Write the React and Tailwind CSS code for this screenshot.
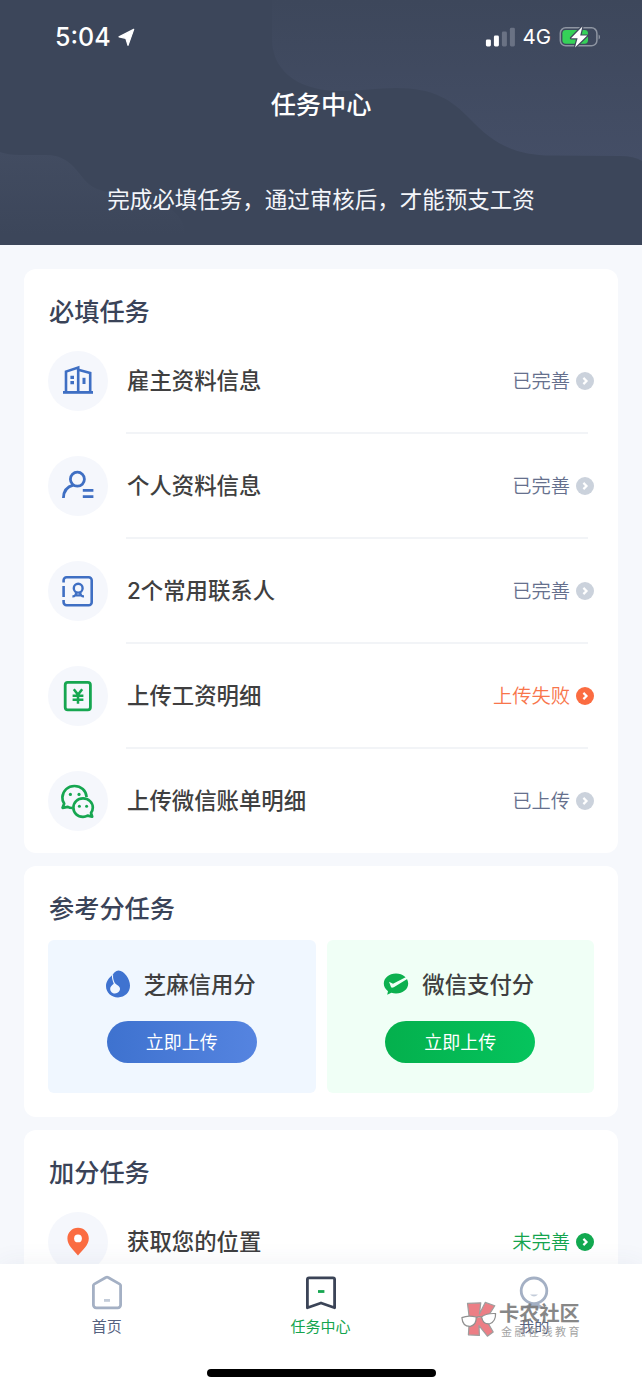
import React from 'react';

const BuildingIcon = () => (
  <svg width="60" height="60" viewBox="0 0 60 60" fill="none" stroke="#3f6fc3" strokeWidth="2.6">
    <path d="M15 41.4h30" strokeWidth="2.8" />
    <path d="M18 41V20.6L30.2 16.6V41" />
    <path d="M30.2 18.8L42.2 22V41" />
    <path d="M22.4 26.4h3.600M22.4 31.600h3.600" strokeWidth="3.4" />
    <path d="M36 26.800v6.200" strokeWidth="3" />
  </svg>
);

const PersonIcon = () => (
  <svg width="60" height="60" viewBox="0 0 60 60" fill="none" stroke="#3f6fc3" strokeWidth="2.8">
    <circle cx="29.400" cy="23.2" r="7" />
    <path d="M15.400 42C15.600 35.4 19.4 30.600 25.4 29.2" />
    <path d="M34.8 34.4h10.600M34.8 40.6h10.600" />
  </svg>
);

const ContactIcon = () => (
  <svg width="60" height="60" viewBox="0 0 60 60" fill="none" stroke="#3f6fc3" strokeWidth="2.6">
    <path d="M15.6 21.4V19.300a3 3 0 0 1 3-3H40.700a3 3 0 0 1 3 3V41.2a3 3 0 0 1-3 3H18.6a3 3 0 0 1-3-3V39" />
    <path d="M15.6 25v11" />
    <circle cx="30.2" cy="27.2" r="4.4" strokeWidth="2.400" />
    <path d="M24.4 35.4Q27.600 35.600 28.400 31.800M36 35.4Q32.800 35.600 32 31.800M27 34.400h6.400" strokeWidth="2.200" />
  </svg>
);

const SalaryIcon = () => (
  <svg width="60" height="60" viewBox="0 0 60 60" fill="none" stroke="#16a650" strokeWidth="2.8">
    <rect x="17.2" y="16.4" width="25.200" height="27.4" rx="2.6" />
    <path d="M25.800 23.2l4.200 5.400 4.200-5.400M24.6 29.800h10.800M24.6 33.800h10.800M30 28v9.800" strokeWidth="2.500" />
  </svg>
);

const WechatIcon = () => (
  <svg width="60" height="60" viewBox="0 0 60 60" fill="none" stroke="#16a650" strokeWidth="2.7" strokeLinejoin="round">
    <path d="M24.4 37C22.6 37 21 36.600 19.8 35.800L14.6 36.800L16.2 32.600C14.8 30.800 14.2 28.600 14.4 26.2C14.8 19.6 20 15 26.4 15C33 15 38 19.4 38.6 26" />
    <path d="M35 27.400C40.6 27.400 44.8 31.600 44.8 36.600C44.8 38.600 44.2 40.4 43 41.8L44.2 45.600L39.6 44.600C38.2 45.400 36.8 45.800 35 45.800C29.4 45.800 25.4 41.800 25.4 36.700C25.4 31.600 29.4 27.400 35 27.400Z" />
    <g fill="#16a650" stroke="none">
      <circle cx="22.4" cy="23.4" r="1.6" />
      <circle cx="31" cy="23.4" r="1.6" />
      <circle cx="31.4" cy="35.3" r="1.5" />
      <circle cx="38.6" cy="35.3" r="1.5" />
    </g>
  </svg>
);

const PinIcon = () => (
  <svg width="60" height="60" viewBox="0 0 60 60">
    <path d="M30 15.8C24 15.8 19.4 20.6 19.4 26.4C19.4 33.4 25.6 37.6 30 43.4C34.4 37.6 40.8 33.4 40.8 26.4C40.8 20.6 36 15.8 30 15.8Z" fill="#fb6c41" />
    <circle cx="30" cy="26.4" r="3.9" fill="#fff" />
  </svg>
);

const SesameIcon = () => (
  <svg width="26" height="28" viewBox="0 0 26 28">
    <path d="M13.5 0.5C10.5 1 9 2.5 8 4.4C4 7.8 1 11 1 16C1 22.6 6.4 27.4 13 27.4C20 27.4 25 22.4 25 15.6C25 9 19.5 0.8 13.5 0.5Z" fill="#3f73d0" />
    <path d="M7.6 5.2C7 9 8.6 12 9.8 14.6" stroke="#f0f7ff" strokeWidth="1.1" fill="none" />
    <path d="M9.400 12.600C8.200 15.200 5.200 16 5.2 18.9C5.2 21.6 7.4 23.4 10 23.4C12.9 23.4 15 21.4 15 18.8C15 15.900 11.600 15.400 9.400 12.600Z" fill="#f0f7ff" />
  </svg>
);

const PayScoreIcon = () => (
  <svg width="26" height="28" viewBox="0 0 26 28">
    <path d="M13 3.6C6 3.6 0.8 8 0.8 13.6C0.8 16.7 2.4 19.4 5 21.2L4.200 24.8L8.4 22.8C9.8 23.3 11.4 23.6 13 23.6C20 23.6 25.2 19.2 25.2 13.6C25.2 8 20 3.6 13 3.6Z" fill="#0cb04f" />
    <path d="M6 11.7L10 13.7L24.6 6.2L25 8.6L10.8 17.2C9 18 8.4 17.8 7.9 16.8Z" fill="#f0fff6" />
  </svg>
);

const ArrowDot = ({ color }) => (
  <svg width="18" height="18" viewBox="0 0 18 18" className="ml-[6px] shrink-0">
    <circle cx="9" cy="9" r="9" fill={color} />
    <path d="M7.4 5.9L10.5 9L7.4 12.1" fill="none" stroke="#fff" strokeWidth="2.2" />
  </svg>
);

const requiredTasks = [
  { icon: BuildingIcon, label: '雇主资料信息', status: '已完善' },
  { icon: PersonIcon, label: '个人资料信息', status: '已完善' },
  { icon: ContactIcon, label: '2个常用联系人', status: '已完善' },
  { icon: SalaryIcon, label: '上传工资明细', status: '上传失败', tone: 'failed' },
  { icon: WechatIcon, label: '上传微信账单明细', status: '已上传' }
];

const tones = {
  done: { text: 'text-[#66708d]', dot: '#cbd2dc' },
  failed: { text: 'text-[#f8754b]', dot: '#fb6c41' },
  todo: { text: 'text-[#14a44e]', dot: '#12a950' }
};

const TaskRow = ({ icon: Icon, label, status, tone = 'done', divider }) => (
  <div className="flex h-[105px] items-start">
    <div className="h-[60px] w-[60px] shrink-0 rounded-full bg-[#f5f7fc]">
      <Icon />
    </div>
    <div className="ml-[18px] flex-1">
      <div className="flex h-[60px] items-center justify-between">
        <span className="pl-px text-[22.4px] font-medium whitespace-nowrap text-[#3f3f40] font-['Inter','Noto_Sans_CJK_SC',sans-serif]">{label}</span>
        <div className="flex items-center">
          <span className="-mt-px text-[19.3px] whitespace-nowrap font-[350] text-[#66708d]">
            <span className={tones[tone].text}>{status}</span>
          </span>
          <ArrowDot color={tones[tone].dot} />
        </div>
      </div>
      {divider && <div className="mt-[21px] mr-[6px] h-[2px] bg-[#f2f4f7]" />}
    </div>
  </div>
);

const CardTitle = ({ children }) => (
  <h2 className="flex h-[38px] items-center pb-px pl-px text-[25.2px] font-medium text-[#3a4358]">{children}</h2>
);

const ScoreCard = ({ icon: Icon, label, className, buttonClass }) => (
  <div className={`flex h-[153px] flex-col items-center rounded-[6px] pt-[26px] ${className}`}>
    <div className="flex h-[36px] items-center gap-[13px] pr-[3px]">
      <Icon />
      <span className="text-[22.4px] font-medium whitespace-nowrap text-[#3f3f40]">{label}</span>
    </div>
    <button className={`mt-[19px] h-[42px] w-[150px] rounded-full pb-px text-[18px] text-white ${buttonClass}`}>立即上传</button>
  </div>
);

const StatusBar = () => (
  <div className="flex h-[74px] items-center justify-between pr-[41px] pl-[55px] text-white">
    <div className="flex items-center gap-[7px] font-['Inter',sans-serif]">
      <span className="text-[25px] leading-none font-medium">5:04</span>
      <svg width="17" height="21" viewBox="0 0 17 21" fill="#fff" stroke="#fff" strokeLinejoin="round">
        <path d="M15.700 2.400L1 9.800L7.800 11.300L10 18.400Z" strokeWidth="1.200" />
      </svg>
    </div>
    <div className="flex items-center font-['Inter',sans-serif]">
      <svg width="31" height="20" viewBox="0 0 31 20" fill="#fff">
        <rect x="0.9" y="12.4" width="5" height="7" rx="1.4" />
        <rect x="8.900" y="8.6" width="5" height="10.8" rx="1.4" />
        <rect x="16.900" y="4.6" width="5" height="14.8" rx="1.4" fill="#6a7284" />
        <rect x="24.900" y="0.8" width="5" height="18.6" rx="1.4" fill="#6a7284" />
      </svg>
      <span className="ml-[6px] text-[20.5px] leading-none">4G</span>
      <svg className="ml-[8px]" width="42" height="24" viewBox="0 0 42 24">
        <rect x="1.300" y="2.800" width="36.6" height="18" rx="5.4" fill="none" stroke="#8e95a2" strokeWidth="1.5" />
        <path d="M39.6 9.4v5a2.9 2.9 0 0 0 0-5Z" fill="#8e95a2" />
        <rect x="3.400" y="4.900" width="25.6" height="13.8" rx="3.4" fill="#35d158" />
        <path d="M23.400 1.400L12 13.200h6.600L16 22.400L28.200 10.600h-7Z" fill="#fff" stroke="#3f485c" strokeWidth="2.4" paintOrder="stroke" strokeLinejoin="round" />
      </svg>
    </div>
  </div>
);

const Header = () => (
  <header className="relative h-[245px] overflow-hidden bg-[#3c465a] text-white">
    <svg className="absolute inset-0" width="642" height="245" viewBox="0 0 642 245">
      <defs>
        <linearGradient id="waveRight" x1="0" y1="0" x2="0" y2="1">
          <stop offset="0" stopColor="#3d475b" />
          <stop offset="1" stopColor="#444e66" />
        </linearGradient>
        <linearGradient id="waveLeft" x1="0" y1="0" x2="0" y2="1">
          <stop offset="0" stopColor="#424c61" />
          <stop offset="1" stopColor="#3c465a" />
        </linearGradient>
      </defs>
      <path d="M272 0V42C274 74 302 91 340 91C362 91 376 88 396 88C434 88 452 100 470 119C492 142 512 155 552 155.5L620 156Q634 156 642 161V0Z" fill="url(#waveRight)" />
      <path d="M0 152Q8 155 20 155H46C78 155 78 184 100 190C130 199 184 196 185 235H0Z" fill="url(#waveLeft)" />
    </svg>
    <div className="relative">
      <StatusBar />
      <h1 className="flex h-[60px] items-center justify-center pb-px text-[25.2px] font-medium">任务中心</h1>
      <p className="mt-[48px] flex h-[34px] items-center justify-center text-[22.5px] whitespace-nowrap text-[#f4f6fa]">完成必填任务，通过审核后，才能预支工资</p>
    </div>
  </header>
);

const TabItem = ({ label, active, children }) => (
  <div className="flex flex-1 flex-col items-center">
    <svg width="34" height="36" viewBox="0 0 34 36" fill="none" stroke={active ? '#3b4457' : '#a4b0c4'} strokeWidth="2.8" strokeLinejoin="round">
      {children}
    </svg>
    <span className={`mt-[4px] text-[15px] leading-[22px] ${active ? 'text-[#14a44e]' : 'text-[#56627f]'}`}>{label}</span>
  </div>
);

const TabBar = () => (
  <nav className="absolute inset-x-0 bottom-0 flex h-[125px] bg-white pt-[11px] pr-px shadow-[0_0_24px_rgba(60,70,110,0.07)]">
    <TabItem label="首页">
      <path d="M3.4 10.6Q3.4 9.6 4.2 9.1L15.8 2.5Q17 1.9 18.2 2.5L29.8 9.1Q30.6 9.6 30.6 10.6V30a2.8 2.8 0 0 1-2.8 2.8H6.2A2.8 2.8 0 0 1 3.4 30Z" />
      <path d="M14 25.400h6" stroke="#c3ccd9" />
    </TabItem>
    <TabItem label="任务中心" active>
      <path d="M3.4 4.4Q3.4 2.8 5 2.8H29Q30.6 2.8 30.6 4.4V32.8L17 28L3.4 32.8Z" />
      <path d="M14 16.5h6.4" stroke="#16a650" />
    </TabItem>
    <TabItem label="我的">
      <circle cx="17" cy="15.8" r="12.800" />
      <path d="M3 33.4Q8 32.6 12.4 28.800H21.600Q26 32.6 31 33.4Z" fill="#a4b0c4" stroke="none" />
      <path d="M13 19.6H21Q17 23.600 13 19.6Z" fill="#c3ccd9" stroke="none" />
    </TabItem>
  </nav>
);

const CommunityMark = () => (
  <div className="absolute top-[1300px] left-[461px] flex items-start gap-[2px] opacity-90">
    <svg width="36" height="38" viewBox="0 0 36 38" strokeLinejoin="round">
      <path d="M6.500 3.400L19.800 2.800L18.400 14L24.200 2.400L33.800 5.800L25 19.600L32.200 32L26.400 36.200L18 25.600L18.400 35.400L7.400 34.800L8.400 19Z" fill="#ea7178" stroke="#949494" strokeWidth="1.2" />
      <path d="M0.900 17.600Q7 14.800 15.200 17Q15.600 24.600 9.400 26.400Q1.600 26.800 0.900 17.600ZM20.600 16.800Q26 13 34.600 13.600Q34.800 21.600 28.800 23.800Q21.800 24.600 20.600 16.800ZM15.200 17.800Q18 16 20.600 17" fill="#fff" stroke="#858585" strokeWidth="1.2" />
    </svg>
    <div className="flex flex-col whitespace-nowrap">
      <span className="mt-[3px] text-[20.200px] leading-[20px] font-bold text-[#7b7b7b]">卡农社区</span>
      <span className="mt-[1px] ml-[2px] text-[11px] leading-[14px] tracking-[2.5px] text-[#999999]">金融在线教育</span>
    </div>
  </div>
);

export default function App() {
  return (
    <div className="relative h-[1389px] w-[642px] overflow-hidden bg-[#f6f8fc] font-['Noto_Sans_CJK_SC',sans-serif]">
      <Header />

      <main className="flex flex-col gap-[13px] px-[24px] pt-[24px]">
        {/* Required tasks */}
        <section className="h-[584px] rounded-[12px] bg-white px-[24px] pt-[23px]">
          <CardTitle>必填任务</CardTitle>
          <div className="mt-[21px]">
            {requiredTasks.map((task, i) => (
              <TaskRow key={task.label} {...task} divider={i < requiredTasks.length - 1} />
            ))}
          </div>
        </section>

        {/* Reference scores */}
        <section className="h-[251px] rounded-[12px] bg-white px-[24px] pt-[23px]">
          <CardTitle>参考分任务</CardTitle>
          <div className="mt-[13px] grid grid-cols-2 gap-[11px]">
            <ScoreCard icon={SesameIcon} label="芝麻信用分" className="bg-[#f0f7ff]" buttonClass="bg-gradient-to-r from-[#3e72cf] to-[#5584e0]" />
            <ScoreCard icon={PayScoreIcon} label="微信支付分" className="bg-[#f0fff6]" buttonClass="bg-gradient-to-r from-[#04b04d] to-[#05c45d]" />
          </div>
        </section>

        {/* Bonus tasks */}
        <section className="h-[240px] rounded-[12px] bg-white px-[24px] pt-[23px]">
          <CardTitle>加分任务</CardTitle>
          <div className="mt-[21px]">
            <TaskRow icon={PinIcon} label="获取您的位置" status="未完善" tone="todo" />
          </div>
        </section>
      </main>

      <TabBar />
      <CommunityMark />
      <div className="absolute bottom-[12px] left-[207px] h-[8px] w-[229px] rounded-full bg-black" />
    </div>
  );
}
